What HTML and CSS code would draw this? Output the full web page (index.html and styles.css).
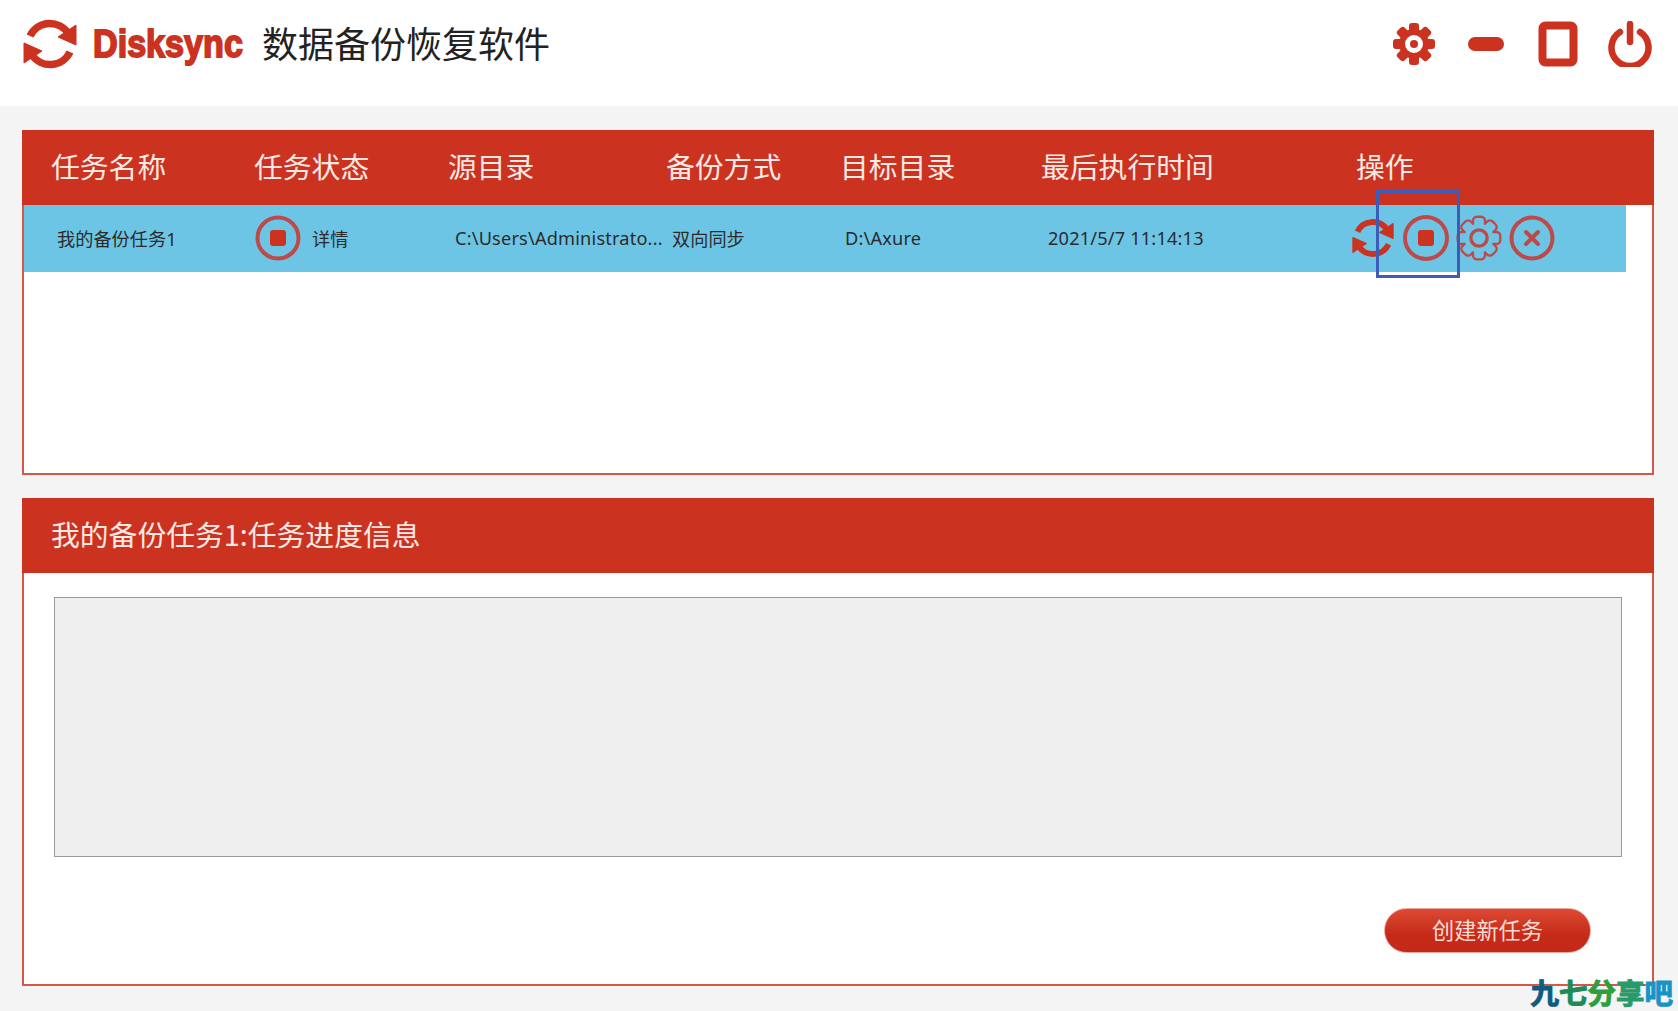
FILE: index.html
```html
<!DOCTYPE html>
<html lang="zh-CN">
<head>
<meta charset="utf-8">
<title>Disksync 数据备份恢复软件</title>
<link rel="stylesheet" href="styles.css">
</head>
<body>
<svg class="defs" width="0" height="0" aria-hidden="true">
  <defs>
    <symbol id="sync" viewBox="0 0 54 56">
      <path d="M7 20 A22 22 0 0 1 45 17" fill="none" stroke="currentColor" stroke-width="7.500"/>
      <path d="M35 21 L53 9 L53 29 Z" fill="currentColor" stroke="currentColor" stroke-width="1" stroke-linejoin="round"/>
      <path d="M47 36 A22 22 0 0 1 9 39" fill="none" stroke="currentColor" stroke-width="7.500"/>
      <path d="M1 27 L19 35 L1 47 Z" fill="currentColor" stroke="currentColor" stroke-width="1" stroke-linejoin="round"/>
    </symbol>
    <g id="gearshape">
      <circle cx="24" cy="24" r="15"/>
      <rect x="19" y="3" width="10" height="42" rx="3"/>
      <rect x="19" y="3" width="10" height="42" rx="3" transform="rotate(45 24 24)"/>
      <rect x="19" y="3" width="10" height="42" rx="3" transform="rotate(90 24 24)"/>
      <rect x="19" y="3" width="10" height="42" rx="3" transform="rotate(135 24 24)"/>
    </g>
  </defs>
</svg>

<header class="topbar">
  <svg class="logo-icon"><use href="#sync"/></svg>
  <span class="brand">Disksync</span>
  <h1 class="app-title">数据备份恢复软件</h1>
  <div class="win-controls">
    <button class="win-btn" aria-label="设置">
      <svg width="48" height="48" viewBox="0 0 48 48">
        <use href="#gearshape" class="gear-solid"/>
        <circle cx="24" cy="24" r="9" class="gear-hole"/>
        <circle cx="24" cy="24" r="4" class="gear-solid"/>
      </svg>
    </button>
    <button class="win-btn" aria-label="最小化">
      <svg width="38" height="16" viewBox="0 0 38 16"><rect x="1" y="1" width="36" height="14" rx="7" class="gear-solid"/></svg>
    </button>
    <button class="win-btn" aria-label="最大化">
      <svg width="40" height="46" viewBox="0 0 40 46"><rect x="4.500" y="4.500" width="31" height="37" rx="3" class="outline-bold"/></svg>
    </button>
    <button class="win-btn" aria-label="关闭">
      <svg width="44" height="46" viewBox="0 0 44 46">
        <path d="M12 11 A18.500 18.500 0 1 0 32 11" class="outline-round"/>
        <path d="M22 3 V21" class="outline-round"/>
      </svg>
    </button>
  </div>
</header>

<main class="content">
  <section class="panel tasks">
    <div class="panel-head task-grid head-grid">
      <span>任务名称</span>
      <span>任务状态</span>
      <span>源目录</span>
      <span>备份方式</span>
      <span>目标目录</span>
      <span>最后执行时间</span>
      <span>操作</span>
    </div>
    <div class="task-row task-grid row-grid">
      <span>我的备份任务1</span>
      <span class="status">
        <svg width="46" height="46" viewBox="0 0 46 46"><circle cx="23" cy="23" r="20.500" class="ring"/><rect x="15" y="15" width="16" height="16" rx="3" class="stop"/></svg>
        <span>详情</span>
      </span>
      <span class="latin">C:\Users\Administrato...</span>
      <span>双向同步</span>
      <span class="latin">D:\Axure</span>
      <span class="latin">2021/5/7 11:14:13</span>
      <span class="ops">
        <svg class="op-sync"><use href="#sync"/></svg>
        <svg width="46" height="46" viewBox="0 0 46 46"><circle cx="23" cy="23" r="21" class="ring"/><rect x="15" y="15" width="16" height="16" rx="3" class="stop"/></svg>
        <svg width="46" height="46" viewBox="0 0 48 48">
          <use href="#gearshape" class="gear-edge"/>
          <use href="#gearshape" class="gear-fill"/>
          <circle cx="24" cy="24" r="8.500" class="ring thin"/>
        </svg>
        <svg width="46" height="46" viewBox="0 0 46 46"><circle cx="23" cy="23" r="20.500" class="ring"/><path d="M17 17 L29 29 M29 17 L17 29" class="cross"/></svg>
      </span>
    </div>
    <div class="focus-box"></div>
  </section>

  <section class="panel progress">
    <h2 class="panel-head progress-title">我的备份任务1:任务进度信息</h2>
    <div class="log-box"></div>
    <div class="actions"><button class="primary">创建新任务</button></div>
  </section>
</main>

<div class="watermark"><span class="w1">九</span><span class="w2">七</span><span class="w3">分</span><span class="w4">享</span><span class="w5">吧</span></div>
</body>
</html>
```

FILE: styles.css
```css
* { box-sizing: border-box; }
html, body { margin: 0; padding: 0; }
body {
  position: relative;
  height: 1011px;
  overflow: hidden;
  background: #f4f4f4;
  color: #2a2a2a;
  font-family: "Noto Sans", "Noto Sans CJK SC", sans-serif;
}
.defs { position: absolute; }

/* top bar */
.topbar {
  display: flex;
  align-items: center;
  height: 106px;
  padding: 0 12px 18px 23px;
  background: #fff;
  color: #cb3220;
}
.logo-icon { width: 54px; height: 56px; flex: none; }
.brand {
  width: 149px;
  margin-left: 16px;
  font-family: "Liberation Sans", sans-serif;
  font-size: 39px;
  font-weight: 700;
  white-space: nowrap;
  -webkit-text-stroke: 1.800px #cb3220;
  color: #cb3220;
  transform: scaleX(0.875);
  transform-origin: left center;
}
.app-title {
  margin: 0 0 0 20px;
  padding-bottom: 4px;
  font-family: "Noto Sans CJK SC", sans-serif;
  font-size: 36px;
  font-weight: 400;
  line-height: 1;
  color: #222;
}
.win-controls { display: flex; margin-left: auto; }
.win-btn {
  display: flex;
  align-items: center;
  justify-content: center;
  width: 72px;
  height: 48px;
  padding: 0;
  border: 0;
  background: none;
}
.gear-solid { fill: #cb3220; }
.gear-hole { fill: #fff; }
.outline-bold { fill: none; stroke: #cb3220; stroke-width: 8; }
.outline-round { fill: none; stroke: #cb3220; stroke-width: 6.500; stroke-linecap: round; }

/* panels */
.content { padding: 24px 0 0 22px; }
.panel {
  position: relative;
  width: 1632px;
  background: #fff;
  border: 2px solid #d2584c;
}
.tasks { height: 345px; }
.progress { height: 488px; margin-top: 23px; }
.panel-head {
  margin: -2px -2px 0;
  background: #cb3220;
  color: #fbe9e4;
  font-size: 28.800px;
  font-weight: 400;
  font-family: "Noto Sans CJK SC", sans-serif;
}
.task-grid { display: grid; align-items: center; }
.head-grid {
  grid-template-columns: 203px 194px 218px 174px 201px 315px 1fr;
  height: 75px;
  padding: 0 0 4px 29px;
}
.row-grid {
  grid-template-columns: 198px 200px 217px 173px 203px 302px 1fr;
  width: 1602px;
  height: 67px;
  padding: 0 0 1px 33px;
  background: #6dc5e6;
  font-size: 18.200px;
  color: #2b2b2b;
}
.latin { letter-spacing: 0.17px; }
.status { display: flex; align-items: center; gap: 11px; }
.ops { display: flex; align-items: center; gap: 7px; color: #cb3220; }
.op-sync { width: 42px; height: 44px; margin: 0 2px; }
.ring { fill: none; stroke: #bd4a48; stroke-width: 4; }
.ring.thin { stroke-width: 3.500; }
.stop { fill: #cb3220; }
.cross { fill: none; stroke: #bd4a48; stroke-width: 4; stroke-linecap: round; }
.gear-edge { fill: #bd4a48; stroke: #bd4a48; stroke-width: 5; }
.gear-fill { fill: #6dc5e6; }
.focus-box {
  position: absolute;
  left: 1352px;
  top: 58px;
  width: 84px;
  height: 88px;
  border: 3px solid #3d5cb8;
}

/* progress */
.progress-title {
  display: flex;
  align-items: center;
  height: 75px;
  padding: 0 0 4px 29px;
}
.log-box {
  width: 1568px;
  height: 260px;
  margin: 24px 0 0 30px;
  background: #efefef;
  border: 1px solid #999;
}
.actions { display: flex; justify-content: flex-end; margin: 51px 61px 0 0; }
.primary {
  width: 207px;
  height: 45px;
  padding: 0 0 3px;
  border: 1px solid #e9a698;
  border-radius: 23px;
  background: linear-gradient(#dc4a33, #c62b18 60%, #c3281a);
  color: #fbdcd3;
  font-family: "Noto Sans CJK SC", sans-serif;
  font-size: 22.200px;
}

/* watermark */
.watermark {
  position: absolute;
  right: 5px;
  bottom: 2px;
  font-family: "Noto Sans CJK SC", sans-serif;
  font-size: 28.500px;
  font-weight: 700;
  line-height: 34px;
  -webkit-text-stroke: 1px currentColor;
}
.w1 { color: #0e5c80; }
.w2 { color: #1f8a55; }
.w3 { color: #2f9e3f; }
.w4 { color: #2a9a68; }
.w5 { color: #1a93c4; }
```
